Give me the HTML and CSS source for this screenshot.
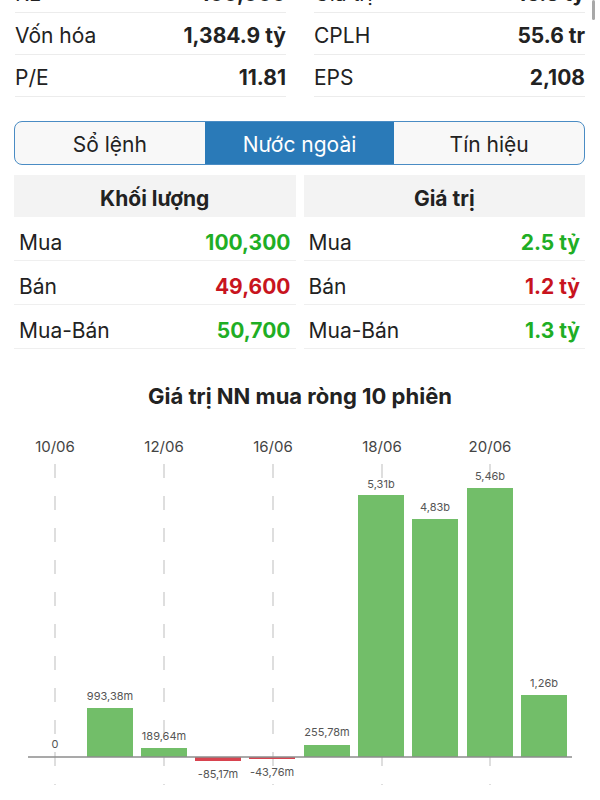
FILE: index.html
```html
<!doctype html>
<html>
<head>
  <title>Nước ngoài</title>
  <link rel="stylesheet" href="styles.css">
</head>
<body>
  <div class="scrollbar"></div>
  <div class="stats">
    <div class="col">
      <div class="row"><span>KL</span><b>100,000</b></div>
      <div class="row"><span>Vốn hóa</span><b>1,384.9 tỷ</b></div>
      <div class="row"><span>P/E</span><b>11.81</b></div>
    </div>
    <div class="col">
      <div class="row"><span>Giá trị</span><b>16.3 tỷ</b></div>
      <div class="row"><span>CPLH</span><b>55.6 tr</b></div>
      <div class="row"><span>EPS</span><b>2,108</b></div>
    </div>
  </div>

  <div class="tabs">
    <div class="tab">Sổ lệnh</div>
    <div class="tab active">Nước ngoài</div>
    <div class="tab">Tín hiệu</div>
  </div>

  <div class="foreign">
    <div class="fcol">
      <div class="fhead">Khối lượng</div>
      <div class="frow"><span>Mua</span><b class="up">100,300</b></div>
      <div class="frow"><span>Bán</span><b class="down">49,600</b></div>
      <div class="frow"><span>Mua-Bán</span><b class="up">50,700</b></div>
    </div>
    <div class="fcol">
      <div class="fhead">Giá trị</div>
      <div class="frow"><span>Mua</span><b class="up">2.5 tỷ</b></div>
      <div class="frow"><span>Bán</span><b class="down">1.2 tỷ</b></div>
      <div class="frow"><span>Mua-Bán</span><b class="up">1.3 tỷ</b></div>
    </div>
  </div>

  <h2 class="chart-title">Giá trị NN mua ròng 10 phiên</h2>
  <svg class="chart" width="600" height="380" viewBox="0 0 600 380">
    <g class="dates">
      <text x="55" y="33">10/06</text>
      <text x="164" y="33">12/06</text>
      <text x="273" y="33">16/06</text>
      <text x="382" y="33">18/06</text>
      <text x="490" y="33">20/06</text>
    </g>
    <g class="grid">
      <line x1="55" y1="45" x2="55" y2="366"/>
      <line x1="164" y1="45" x2="164" y2="366"/>
      <line x1="273" y1="45" x2="273" y2="366"/>
      <line x1="382" y1="45" x2="382" y2="366"/>
      <line x1="490" y1="45" x2="490" y2="366"/>
    </g>
    <g class="pos">
      <rect x="87" y="289" width="46" height="49"/>
      <rect x="141" y="329" width="46" height="9"/>
      <rect x="304" y="326" width="46" height="12"/>
      <rect x="358" y="76" width="46" height="262"/>
      <rect x="412" y="100" width="46" height="238"/>
      <rect x="467" y="69" width="46" height="269"/>
      <rect x="521" y="276" width="46" height="62"/>
    </g>
    <g class="neg">
      <rect x="195" y="338" width="46" height="4"/>
      <rect x="249" y="338" width="46" height="2"/>
    </g>
    <line class="axis" x1="28" y1="338" x2="572" y2="338"/>
    <g class="vals">
      <text x="55" y="329">0</text>
      <text x="110" y="281">993,38m</text>
      <text x="164" y="321">189,64m</text>
      <text x="218" y="359">-85,17m</text>
      <text x="272" y="357">-43,76m</text>
      <text x="327" y="317">255,78m</text>
      <text x="381" y="69">5,31b</text>
      <text x="435" y="92">4,83b</text>
      <text x="490" y="61">5,46b</text>
      <text x="544" y="268">1,26b</text>
    </g>
  </svg>
</body>
</html>
```

FILE: styles.css
```css
body {
  margin: 0;
  background: #fff;
  color: #222;
  font-family: Inter, "Liberation Sans", sans-serif;
  overflow: hidden;
}

.scrollbar {
  position: absolute;
  top: 0;
  left: 592px;
  width: 3px;
  height: 20px;
  border-radius: 2px;
  background: #a8a8a8;
}

.stats {
  display: grid;
  grid-template-columns: 1fr 1fr;
  column-gap: 28px;
  padding: 0 15px;
  margin-top: -29px;
}
.row {
  display: flex;
  justify-content: space-between;
  align-items: center;
  box-sizing: border-box;
  height: 42px;
  padding-top: 4px;
  border-bottom: 1px solid #ececec;
  font-size: 21px;
}
.row b { font-weight: 700; }

.tabs {
  display: flex;
  margin: 24px 15px 0 14px;
  height: 42px;
  border: 1.5px solid #4a8cc4;
  border-radius: 8px;
  overflow: hidden;
  background: #f8f8f8;
}
.tab {
  flex: 1;
  display: flex;
  align-items: center;
  justify-content: center;
  padding-top: 2px;
  font-size: 21px;
  color: #222;
}
.tab.active {
  background: #2a7ab8;
  color: #fff;
}

.foreign {
  display: grid;
  grid-template-columns: 1fr 1fr;
  column-gap: 8px;
  padding: 0 15px 0 14px;
  margin-top: 10px;
}
.fhead {
  height: 42px;
  line-height: 47px;
  text-align: center;
  background: #f3f3f3;
  font-size: 21px;
  font-weight: 700;
}
.frow {
  display: flex;
  justify-content: space-between;
  align-items: center;
  box-sizing: border-box;
  height: 44px;
  padding: 7px 5px 0;
  border-bottom: 1px solid #efefef;
  font-size: 21px;
}
.frow:first-of-type { height: 45px; }
.frow b { font-weight: 700; }
.up { color: #1fae25; }
.down { color: #c8141e; }

.chart-title {
  margin: 34px 0 0;
  height: 26px;
  line-height: 26px;
  text-align: center;
  font-size: 22px;
  font-weight: 700;
}
.chart {
  display: block;
  margin-top: 10px;
}
.dates text {
  font-size: 15px;
  fill: #444;
  text-anchor: middle;
}
.grid line {
  stroke: #bdbdbd;
  stroke-width: 1;
  stroke-dasharray: 14 18;
}
.pos rect { fill: #72be69; }
.neg rect { fill: #d8434f; }
.axis {
  stroke: #8c8c8c;
  stroke-width: 1.5;
}
.vals text {
  font-size: 11px;
  fill: #555;
  text-anchor: middle;
}
```
